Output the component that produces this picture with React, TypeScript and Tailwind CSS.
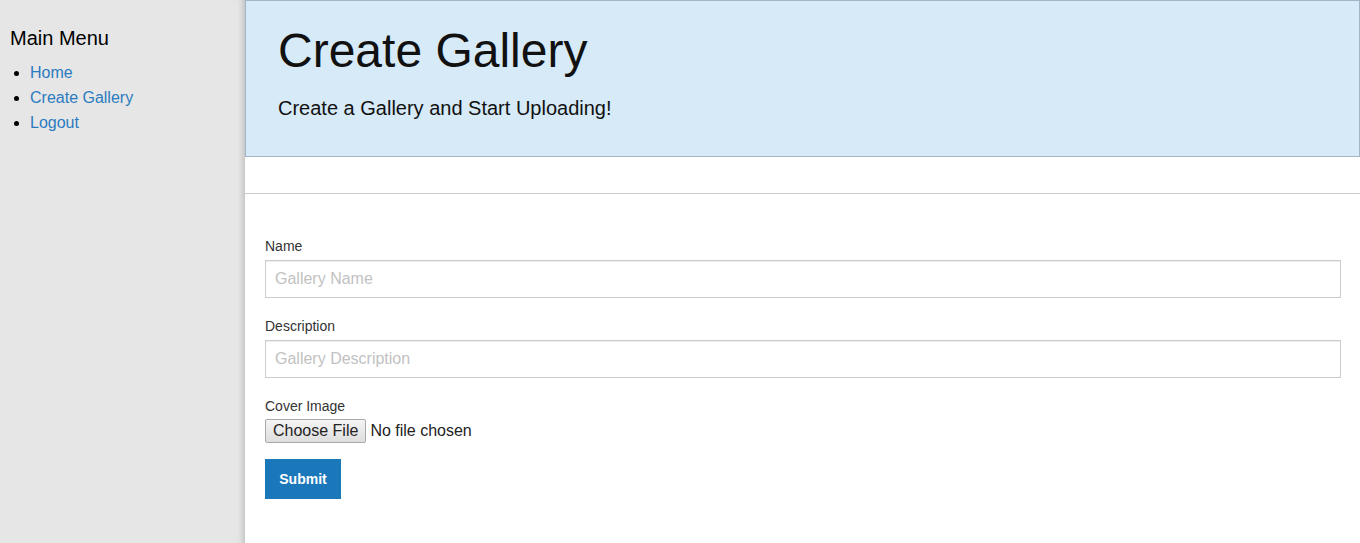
import React from 'react'

const font = { fontFamily: '"Liberation Sans", Arial, sans-serif' }

function Sidebar() {
  return (
    <aside className="w-[245px] shrink-0 bg-[#e6e6e6] shadow-[inset_-7px_0_6px_-5px_rgba(0,0,0,0.18)] px-[10px] pt-[26px]">
      <h3 className="text-[20px] leading-[24px] text-black">Main Menu</h3>
      <ul className="list-disc pl-[20px] mt-[10px] text-[16px] leading-[25px]">
        {['Home', 'Create Gallery', 'Logout'].map((item) => (
          <li key={item} className="marker:text-black">
            <a href="#" className="text-[#2b7bc0] hover:underline">
              {item}
            </a>
          </li>
        ))}
      </ul>
    </aside>
  )
}

function Field({ label, placeholder }: { label: string; placeholder: string }) {
  return (
    <div className="mb-[18px]">
      <label className="block text-[14px] leading-[20px] text-[#333] mb-[4px]">{label}</label>
      <input
        type="text"
        placeholder={placeholder}
        className="block w-full h-[38px] px-[9px] text-[16px] text-[#333] border border-[#ccc] bg-white shadow-[inset_0_1px_1px_rgba(0,0,0,0.075)] outline-none placeholder:text-[#c2c2c2]"
        style={font}
      />
    </div>
  )
}

export default function App() {
  return (
    <div className="flex min-h-screen bg-white text-black" style={font}>
      <Sidebar />
      <main className="flex-1 min-w-0">
        <div className="h-[157px] bg-[#d6eaf8] border border-[#a3b6c9] pl-[32px] pt-[23px]">
          <h1 className="text-[48px] leading-[54px] text-[#111]">Create Gallery</h1>
          <p className="text-[20px] leading-[24px] mt-[18px] text-[#111]">Create a Gallery and Start Uploading!</p>
        </div>
        <hr className="mt-[36px] border-0 border-t border-[#ccc]" />
        <form className="pl-[20px] pt-[42px] pr-[19px]" onSubmit={(e) => e.preventDefault()}>
          <Field label="Name" placeholder="Gallery Name" />
          <Field label="Description" placeholder="Gallery Description" />
          <div>
            <label className="block text-[14px] leading-[20px] text-[#333]">Cover Image</label>
            <div className="flex items-center mt-[3px] h-[24px]">
              <span className="inline-flex items-center h-[24px] px-[7px] text-[16px] text-[#222] border border-[#a9a9a9] rounded-[2px] bg-gradient-to-b from-[#f4f4f4] to-[#dedede]">
                Choose File
              </span>
              <span className="ml-[4px] text-[16px] text-[#222]">No file chosen</span>
            </div>
          </div>
          <button
            type="submit"
            className="mt-[16px] h-[40px] w-[76px] bg-[#1a78ba] text-white text-[14px] font-bold"
            style={font}
          >
            Submit
          </button>
        </form>
      </main>
    </div>
  )
}
